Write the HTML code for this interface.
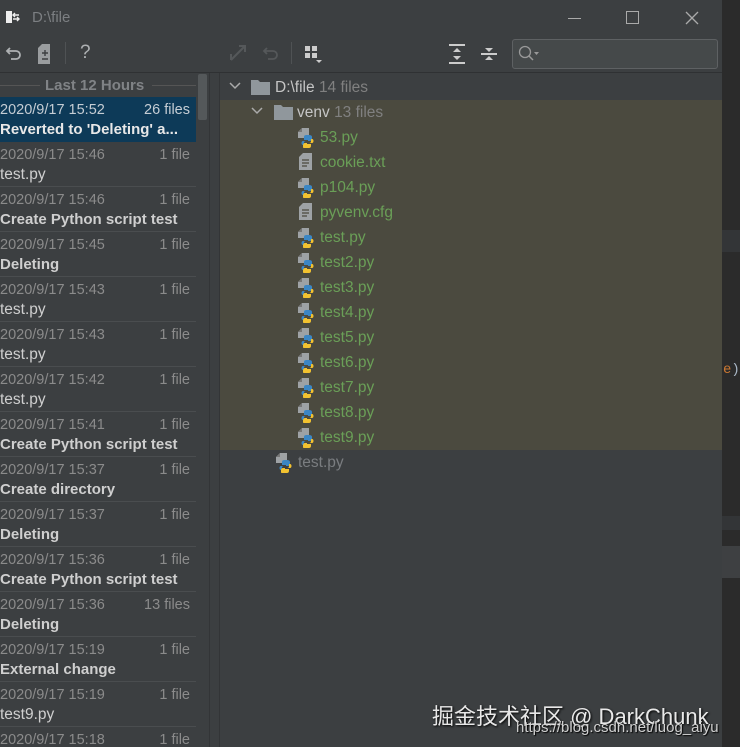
<!DOCTYPE html>
<html style="width:740px;height:747px;overflow:hidden"><head><meta charset="utf-8"><style>
*{margin:0;padding:0;box-sizing:border-box}
body{width:740px;height:747px;background:#3c3f41;font-family:"Liberation Sans","DejaVu Sans",sans-serif;position:relative;overflow:hidden;color:#bbb}
.a{position:absolute}
.row{position:absolute;left:0;width:196px;height:45px;border-bottom:1px solid #4a4d4f}
.row .d{position:absolute;left:0;top:5px;font-size:14.5px;color:#8b8b8b;white-space:nowrap}
.row .n{position:absolute;right:6px;top:5px;font-size:14.5px;color:#8b8b8b}
.row .t{position:absolute;left:0;top:24px;font-size:15.5px;color:#cfcfcf;white-space:nowrap}
.row .t.b{font-weight:bold;font-size:15px}
.f{position:absolute;font-size:15.5px;color:#6a9f57;white-space:nowrap}
</style></head><body>
<div class="a" style="left:722px;top:0;width:18px;height:747px;background:#2b2b2b"></div>
<div class="a" style="left:722px;top:230px;width:18px;height:22px;background:#333537"></div>
<div class="a" style="left:722px;top:516px;width:18px;height:14px;background:#333537"></div>
<div class="a" style="left:722px;top:546px;width:18px;height:32px;background:#3e4042"></div>
<div class="a" style="left:723px;top:362px;font-size:14px;font-family:'Liberation Mono',monospace;color:#a9b7c6"><span style="color:#cc7832">e</span>)</div>

<svg class="a" style="left:6px;top:10px" width="14" height="14" viewBox="0 0 14 14"><rect x="0" y="1" width="6" height="12" fill="#eee"/><path d="M7 5h6M7 9h6M9 3l-2 2 2 2M11 7l2 2-2 2" stroke="#eee" stroke-width="1.4" fill="none"/></svg>
<div class="a" style="left:32px;top:9px;font-size:15px;color:#7c7f82">D:\file</div>
<div class="a" style="left:568px;top:18px;width:13px;height:1px;background:#aaa"></div>
<div class="a" style="left:626px;top:11px;width:13px;height:13px;border:1px solid #aaa"></div>
<svg class="a" style="left:685px;top:11px" width="14" height="14"><path d="M1 1L13 13M13 1L1 13" stroke="#aaa" stroke-width="1.3"/></svg>

<svg class="a" style="left:5px;top:44px" width="18" height="18" viewBox="0 0 18 18"><path d="M5 4L2 7l3 3M2 7h9a4 4 0 0 1 0 8H6" stroke="#aeb1b3" stroke-width="1.8" fill="none"/></svg>
<svg class="a" style="left:38px;top:44px" width="16" height="20"><path d="M4 0h8v20H0V4z" fill="#9a9d9f"/><path d="M4 9h6M7 6v6M4 15h6" stroke="#3c3f41" stroke-width="1.4"/></svg>
<div class="a" style="left:65px;top:42px;width:1px;height:22px;background:#4f5254"></div>
<div class="a" style="left:80px;top:42px;font-size:19px;color:#aeb1b3">?</div>
<svg class="a" style="left:229px;top:44px" width="18" height="18"><path d="M2 16L16 2M10 2h6v6M2 10v6" stroke="#55585a" stroke-width="2" fill="none"/></svg>
<svg class="a" style="left:262px;top:44px" width="18" height="18"><path d="M5 4L2 7l3 3M2 7h9a4 4 0 0 1 0 8H6" stroke="#55585a" stroke-width="1.8" fill="none"/></svg>
<div class="a" style="left:291px;top:42px;width:1px;height:22px;background:#4f5254"></div>
<svg class="a" style="left:305px;top:46px" width="18" height="18"><rect x="0" y="0" width="5" height="5" fill="#ccc"/><rect x="7" y="0" width="5" height="5" fill="#ccc"/><rect x="0" y="7" width="5" height="5" fill="#ccc"/><rect x="7" y="7" width="5" height="5" fill="#ccc"/><path d="M11 14h6l-3 3z" fill="#ccc"/></svg>
<svg class="a" style="left:449px;top:44px" width="16" height="20"><path d="M0 1h16M0 19h16" stroke="#ccc" stroke-width="2"/><path d="M8 4l-4 4h8zM8 16l-4-4h8z" fill="#ccc"/></svg>
<svg class="a" style="left:481px;top:44px" width="16" height="20"><path d="M0 10h16" stroke="#ccc" stroke-width="2"/><path d="M8 8l-4-4h8zM8 12l-4 4h8z" fill="#ccc"/></svg>
<div class="a" style="left:512px;top:39px;width:206px;height:30px;background:#45494a;border:1px solid #5e6163;border-radius:3px"></div>
<svg class="a" style="left:518px;top:45px" width="24" height="18"><circle cx="7" cy="7" r="5.5" stroke="#999" stroke-width="1.3" fill="none"/><path d="M11 11l4 4" stroke="#999" stroke-width="1.5"/><path d="M16 7h5l-2.5 3z" fill="#999"/></svg>
<div class="a" style="left:0;top:72px;width:722px;height:1px;background:#2f3133"></div>

<div class="a" style="left:0;top:85px;width:40px;height:1px;background:#555"></div>
<div class="a" style="left:152px;top:85px;width:44px;height:1px;background:#555"></div>
<div class="a" style="left:45px;top:77px;font-size:15px;font-weight:bold;color:#808386">Last 12 Hours</div>
<div class="a" style="left:198px;top:74px;width:9px;height:46px;background:#54585a;border-radius:2px"></div>
<div class="a" style="left:209px;top:73px;width:1px;height:674px;background:#333537"></div>
<div class="a" style="left:219px;top:73px;width:1px;height:674px;background:#333537"></div>

<div class="row" style="top:97px;background:#0d3a58;border-bottom:none"><span class="d" style="color:#c5cdd4">2020/9/17 15:52</span><span class="n" style="color:#c5cdd4">26 files</span><span class="t b" style="color:#e8e8e8">Reverted to 'Deleting' a...</span></div>
<div class="row" style="top:142px"><span class="d">2020/9/17 15:46</span><span class="n">1 file</span><span class="t">test.py</span></div>
<div class="row" style="top:187px"><span class="d">2020/9/17 15:46</span><span class="n">1 file</span><span class="t b">Create Python script test</span></div>
<div class="row" style="top:232px"><span class="d">2020/9/17 15:45</span><span class="n">1 file</span><span class="t b">Deleting</span></div>
<div class="row" style="top:277px"><span class="d">2020/9/17 15:43</span><span class="n">1 file</span><span class="t">test.py</span></div>
<div class="row" style="top:322px"><span class="d">2020/9/17 15:43</span><span class="n">1 file</span><span class="t">test.py</span></div>
<div class="row" style="top:367px"><span class="d">2020/9/17 15:42</span><span class="n">1 file</span><span class="t">test.py</span></div>
<div class="row" style="top:412px"><span class="d">2020/9/17 15:41</span><span class="n">1 file</span><span class="t b">Create Python script test</span></div>
<div class="row" style="top:457px"><span class="d">2020/9/17 15:37</span><span class="n">1 file</span><span class="t b">Create directory</span></div>
<div class="row" style="top:502px"><span class="d">2020/9/17 15:37</span><span class="n">1 file</span><span class="t b">Deleting</span></div>
<div class="row" style="top:547px"><span class="d">2020/9/17 15:36</span><span class="n">1 file</span><span class="t b">Create Python script test</span></div>
<div class="row" style="top:592px"><span class="d">2020/9/17 15:36</span><span class="n">13 files</span><span class="t b">Deleting</span></div>
<div class="row" style="top:637px"><span class="d">2020/9/17 15:19</span><span class="n">1 file</span><span class="t b">External change</span></div>
<div class="row" style="top:682px"><span class="d">2020/9/17 15:19</span><span class="n">1 file</span><span class="t">test9.py</span></div>
<div class="row" style="top:727px;height:20px;border-bottom:none"><span class="d">2020/9/17 15:18</span><span class="n">1 file</span></div>

<div class="a" style="left:220px;top:100px;width:502px;height:350px;background:#4b4a3f"></div>
<svg class="a" style="left:229px;top:81px" width="12" height="10"><path d="M1 2l5 5 5-5" stroke="#aaa" stroke-width="1.5" fill="none"/></svg>
<svg class="a" style="left:251px;top:79px" width="20" height="16"><path d="M0 1h7l2 2h10v13H0z" fill="#90979c"/></svg>
<div class="a" style="left:275px;top:79px;font-size:15.5px;color:#c5c5c5">D:\file <span style="color:#808080">14 files</span></div>
<svg class="a" style="left:251px;top:106px" width="12" height="10"><path d="M1 2l5 5 5-5" stroke="#aaa" stroke-width="1.5" fill="none"/></svg>
<svg class="a" style="left:274px;top:104px" width="20" height="16"><path d="M0 1h7l2 2h10v13H0z" fill="#90979c"/></svg>
<div class="a" style="left:297px;top:104px;font-size:15.5px;color:#c5c5c5">venv <span style="color:#808080">13 files</span></div>

<svg width="0" height="0" style="position:absolute"><defs>
<g id="py"><path d="M4 0h7v10H0V4z" fill="#9ea2a5"/><path d="M4 0v4H0" fill="#777"/><path d="M9 7c-3 0-3 1-3 3v2h4v1H5c-2 0-2 4 0 4h1v-2c0-2 1-2 3-2h3c1 0 2-1 2-2v-2c0-2-2-2-5-2z" fill="#3b86c4"/><path d="M10 20c3 0 3-1 3-3v-1H9v-1h5c2 0 2-4 0-4h-1v2c0 2-1 2-3 2H7c-1 0-2 1-2 2v2c0 1 2 3 5 3z" fill="#f2c230"/></g>
<g id="tx"><path d="M4 0h9v17H0V4z" fill="#9ea2a5"/><path d="M3 7h7M3 10h7M3 13h5" stroke="#4b4a3f" stroke-width="1.2"/></g>
</defs></svg>
<svg class="a" style="left:298px;top:128px" width="20" height="20"><use href="#py"/></svg><div class="f" style="left:320px;top:129px">53.py</div>
<svg class="a" style="left:299px;top:153px" width="20" height="20"><use href="#tx"/></svg><div class="f" style="left:320px;top:154px">cookie.txt</div>
<svg class="a" style="left:298px;top:178px" width="20" height="20"><use href="#py"/></svg><div class="f" style="left:320px;top:179px">p104.py</div>
<svg class="a" style="left:299px;top:203px" width="20" height="20"><use href="#tx"/></svg><div class="f" style="left:320px;top:204px">pyvenv.cfg</div>
<svg class="a" style="left:298px;top:228px" width="20" height="20"><use href="#py"/></svg><div class="f" style="left:320px;top:229px">test.py</div>
<svg class="a" style="left:298px;top:253px" width="20" height="20"><use href="#py"/></svg><div class="f" style="left:320px;top:254px">test2.py</div>
<svg class="a" style="left:298px;top:278px" width="20" height="20"><use href="#py"/></svg><div class="f" style="left:320px;top:279px">test3.py</div>
<svg class="a" style="left:298px;top:303px" width="20" height="20"><use href="#py"/></svg><div class="f" style="left:320px;top:304px">test4.py</div>
<svg class="a" style="left:298px;top:328px" width="20" height="20"><use href="#py"/></svg><div class="f" style="left:320px;top:329px">test5.py</div>
<svg class="a" style="left:298px;top:353px" width="20" height="20"><use href="#py"/></svg><div class="f" style="left:320px;top:354px">test6.py</div>
<svg class="a" style="left:298px;top:378px" width="20" height="20"><use href="#py"/></svg><div class="f" style="left:320px;top:379px">test7.py</div>
<svg class="a" style="left:298px;top:403px" width="20" height="20"><use href="#py"/></svg><div class="f" style="left:320px;top:404px">test8.py</div>
<svg class="a" style="left:298px;top:428px" width="20" height="20"><use href="#py"/></svg><div class="f" style="left:320px;top:429px">test9.py</div>
<svg class="a" style="left:276px;top:453px" width="20" height="20"><use href="#py"/></svg><div class="f" style="left:298px;top:454px;color:#7a7d80">test.py</div>

<div class="a" style="left:432px;top:699px;font-size:22px;color:#e8e8e8;text-shadow:1px 1px 2px #000;font-family:'Liberation Sans','Noto Sans CJK SC',sans-serif;white-space:nowrap">掘金技术社区 @ DarkChunk</div>
<div class="a" style="left:516px;top:719px;font-size:15px;color:#d0d0d0;text-shadow:1px 1px 1px #000;white-space:nowrap">https://blog.csdn.net/luog_aiyu</div>
</body></html>
